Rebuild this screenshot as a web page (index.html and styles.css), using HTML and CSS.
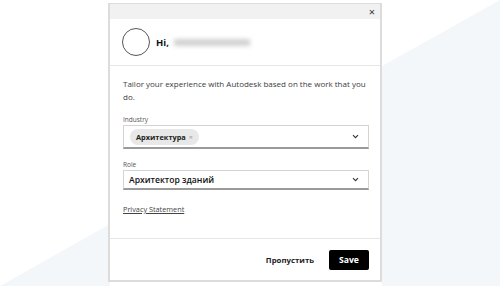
FILE: index.html
```html
<!DOCTYPE html>
<html lang="ru">
<head>
  <meta charset="UTF-8">
  <title>Autodesk - Профиль</title>
  <link rel="stylesheet" href="styles.css">
</head>
<body>
  <div class="bg-shape bg-left"></div>
  <div class="bg-shape bg-right"></div>

  <!-- Окно настройки профиля -->
  <div class="modal">
    <div class="modal-top">
      <span class="close">&times;</span>
    </div>
    <div class="modal-head">
      <div class="avatar"></div>
      <span class="hi">Hi,</span>
      <span class="user-name"></span>
    </div>
    <div class="modal-body">
      <p class="intro">Tailor your experience with Autodesk based on the work that you do.</p>

      <label class="field-label">Industry</label>
      <div class="select select-multi">
        <span class="chip">Архитектура <span class="chip-x">&times;</span></span>
        <svg class="chevron" width="7" height="5" viewBox="0 0 7 5"><path d="M1 1.2l2.5 2.5 2.5-2.5" fill="none" stroke="#333" stroke-width="1.1"/></svg>
      </div>

      <label class="field-label">Role</label>
      <div class="select">
        <span class="select-value">Архитектор зданий</span>
        <svg class="chevron" width="7" height="5" viewBox="0 0 7 5"><path d="M1 1.2l2.5 2.5 2.5-2.5" fill="none" stroke="#333" stroke-width="1.1"/></svg>
      </div>

      <a class="privacy" href="#">Privacy Statement</a>
    </div>
    <div class="modal-foot">
      <button class="btn-skip">Пропустить</button>
      <button class="btn-save">Save</button>
    </div>
  </div>
</body>
</html>
```

FILE: styles.css
```css
/* Основные стили */
body {
  margin: 0;
  height: 286px;
  overflow: hidden;
  position: relative;
  font-family: "Open Sans", Arial, sans-serif;
  background-color: #fff;
  color: #3c3c3c;
}
/* Фоновые фигуры */
.bg-shape {
  position: absolute;
  background-color: #f4f7fa;
}
.bg-left {
  left: 0;
  top: 224px;
  width: 110px;
  height: 62px;
  clip-path: polygon(0 100%, 100% 0, 100% 100%);
}
.bg-right {
  left: 382px;
  top: 0;
  width: 118px;
  height: 286px;
  clip-path: polygon(0 66px, 100% 0, 100% 100%, 0 100%);
}
/* Модальное окно */
.modal {
  position: relative;
  margin: 3px 0 0 108px;
  width: 270px;
  border: 2px solid #dcdcdc;
  border-top-width: 1px;
  background-color: #fff;
}
.modal-top {
  height: 15px;
  background-color: #f1f1f1;
  display: flex;
  justify-content: flex-end;
  align-items: center;
  padding-right: 5px;
}
.close {
  font-size: 11px;
  line-height: 1;
  color: #333;
}
.modal-head {
  height: 46px;
  display: flex;
  align-items: center;
  padding: 0 12px;
  border-bottom: 1px solid #e6e6e6;
}
.avatar {
  width: 26px;
  height: 26px;
  border: 1px solid #555;
  border-radius: 50%;
  margin-right: 6px;
}
.hi {
  font-size: 9.5px;
  font-weight: bold;
  color: #111;
  margin-right: 5px;
}
.user-name {
  width: 76px;
  height: 7px;
  background-color: #d2d2d2;
  filter: blur(2px);
}
.modal-body {
  padding: 11px 11px 21px 13px;
  border-bottom: 1px solid #e6e6e6;
}
.intro {
  margin: 0 0 12px;
  font-size: 8px;
  line-height: 13px;
  color: #3c3c3c;
}
.field-label {
  display: block;
  font-size: 6.5px;
  color: #555;
  margin-bottom: 1px;
}
.select {
  height: 17px;
  border: 1px solid #d4d4d4;
  border-bottom: 2px solid #9a9a9a;
  display: flex;
  align-items: center;
  justify-content: space-between;
  padding: 0 9px 0 5px;
  margin-bottom: 5px;
}
.select-multi {
  height: 21px;
  margin-bottom: 11px;
  padding-left: 6px;
}
.chip {
  background-color: #e8e8e8;
  border-radius: 8px;
  padding: 3px 6px 3px 6px;
  font-size: 7.4px;
  font-weight: bold;
  color: #222;
}
.chip-x {
  font-weight: normal;
  color: #999;
  margin-left: 1px;
}
.select-value {
  font-size: 8.6px;
  font-weight: 600;
  color: #111;
}
.privacy {
  display: inline-block;
  margin-top: 0;
  font-size: 7.3px;
  color: #444;
  text-decoration: underline;
}
/* Нижняя панель с кнопками */
.modal-foot {
  height: 41px;
  display: flex;
  align-items: center;
  justify-content: flex-end;
  padding-right: 11px;
  gap: 15px;
}
.btn-skip {
  background: none;
  border: none;
  padding: 0;
  font-family: inherit;
  font-size: 7.8px;
  font-weight: bold;
  color: #222;
}
.btn-save {
  background-color: #000;
  color: #fff;
  border: none;
  width: 40px;
  height: 20px;
  border-radius: 2px;
  font-family: inherit;
  font-size: 8.6px;
  font-weight: bold;
}
```
